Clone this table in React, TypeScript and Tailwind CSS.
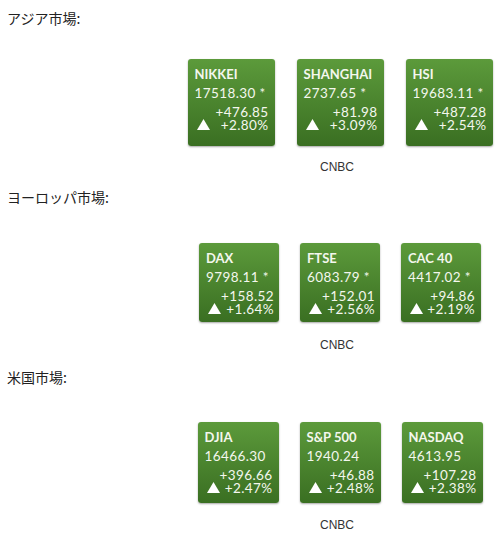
import React from "react";

type Q = { name: string; value: string; chg: string; pct: string };

const Tri = () => (
  <svg width="13" height="11" viewBox="0 0 13 11" className="block">
    <polygon points="6.5,0 13,11 0,11" fill="#ffffff" />
  </svg>
);

function Card({ q, w, h }: { q: Q; w: string; h: string }) {
  return (
    <div
      className={`${w} ${h} rounded-[3px] bg-gradient-to-b from-[#5c9a3b] to-[#3a6f22] shadow-[0_1px_2px_rgba(0,0,0,0.35)] flex flex-col pl-[7px] pr-[6px] pt-[7px] text-[#f4f7ee]`}
      style={{ fontFamily: "Lato, 'Open Sans', sans-serif" }}
    >
      <div className="text-[13px] leading-[17px] font-bold">{q.name}</div>
      <div className="text-[13.5px] leading-[17px] mt-[2px] tracking-[0.4px]">{q.value}</div>
      <div className="flex items-end justify-between mt-[4px]">
        <div className="mb-[2px] ml-[2px]">
          <Tri />
        </div>
        <div className="text-right text-[13.5px] leading-[13px] tracking-[0.4px]">
          <div>{q.chg}</div>
          <div>{q.pct}</div>
        </div>
      </div>
    </div>
  );
}

function Section({
  title,
  quotes,
  w,
  h,
  gap,
  headMt,
  cardsMt,
  cnbcMt,
}: {
  title: string;
  quotes: Q[];
  w: string;
  h: string;
  gap: string;
  headMt: string;
  cardsMt: string;
  cnbcMt: string;
}) {
  return (
    <div>
      <div
        className={`${headMt} pl-[7px] text-[14px] leading-[20px] text-[#222]`}
        style={{ fontFamily: "'Noto Sans CJK JP', sans-serif" }}
      >
        {title}
      </div>
      <div className="ml-[180px] w-[320px]">
        <div className={`${cardsMt} flex justify-center ${gap}`}>
          {quotes.map((q) => (
            <Card key={q.name} q={q} w={w} h={h} />
          ))}
        </div>
        <div
          className={`${cnbcMt} text-center text-[12px] leading-[16px] text-[#333] pr-[6px]`}
          style={{ fontFamily: "'Liberation Sans', Arial, sans-serif" }}
        >
          CNBC
        </div>
      </div>
    </div>
  );
}

export default function App() {
  return (
    <div className="w-[504px] h-[543px] bg-white overflow-hidden">
      <Section
        title="アジア市場:"
        headMt="mt-[8px]"
        cardsMt="mt-[31px]"
        cnbcMt="mt-[13px]"
        w="w-[87px]"
        h="h-[87px]"
        gap="gap-[22px]"
        quotes={[
          { name: "NIKKEI", value: "17518.30 *", chg: "+476.85", pct: "+2.80%" },
          { name: "SHANGHAI", value: "2737.65 *", chg: "+81.98", pct: "+3.09%" },
          { name: "HSI", value: "19683.11 *", chg: "+487.28", pct: "+2.54%" },
        ]}
      />
      <Section
        title="ヨーロッパ市場:"
        headMt="mt-[12px]"
        cardsMt="mt-[36px]"
        cnbcMt="mt-[15px]"
        w="w-[80px]"
        h="h-[79px]"
        gap="gap-[21px]"
        quotes={[
          { name: "DAX", value: "9798.11 *", chg: "+158.52", pct: "+1.64%" },
          { name: "FTSE", value: "6083.79 *", chg: "+152.01", pct: "+2.56%" },
          { name: "CAC 40", value: "4417.02 *", chg: "+94.86", pct: "+2.19%" },
        ]}
      />
      <Section
        title="米国市場:"
        headMt="mt-[14px]"
        cardsMt="mt-[35px]"
        cnbcMt="mt-[14px]"
        w="w-[81px]"
        h="h-[81px]"
        gap="gap-[21px]"
        quotes={[
          { name: "DJIA", value: "16466.30", chg: "+396.66", pct: "+2.47%" },
          { name: "S&P 500", value: "1940.24", chg: "+46.88", pct: "+2.48%" },
          { name: "NASDAQ", value: "4613.95", chg: "+107.28", pct: "+2.38%" },
        ]}
      />
    </div>
  );
}
